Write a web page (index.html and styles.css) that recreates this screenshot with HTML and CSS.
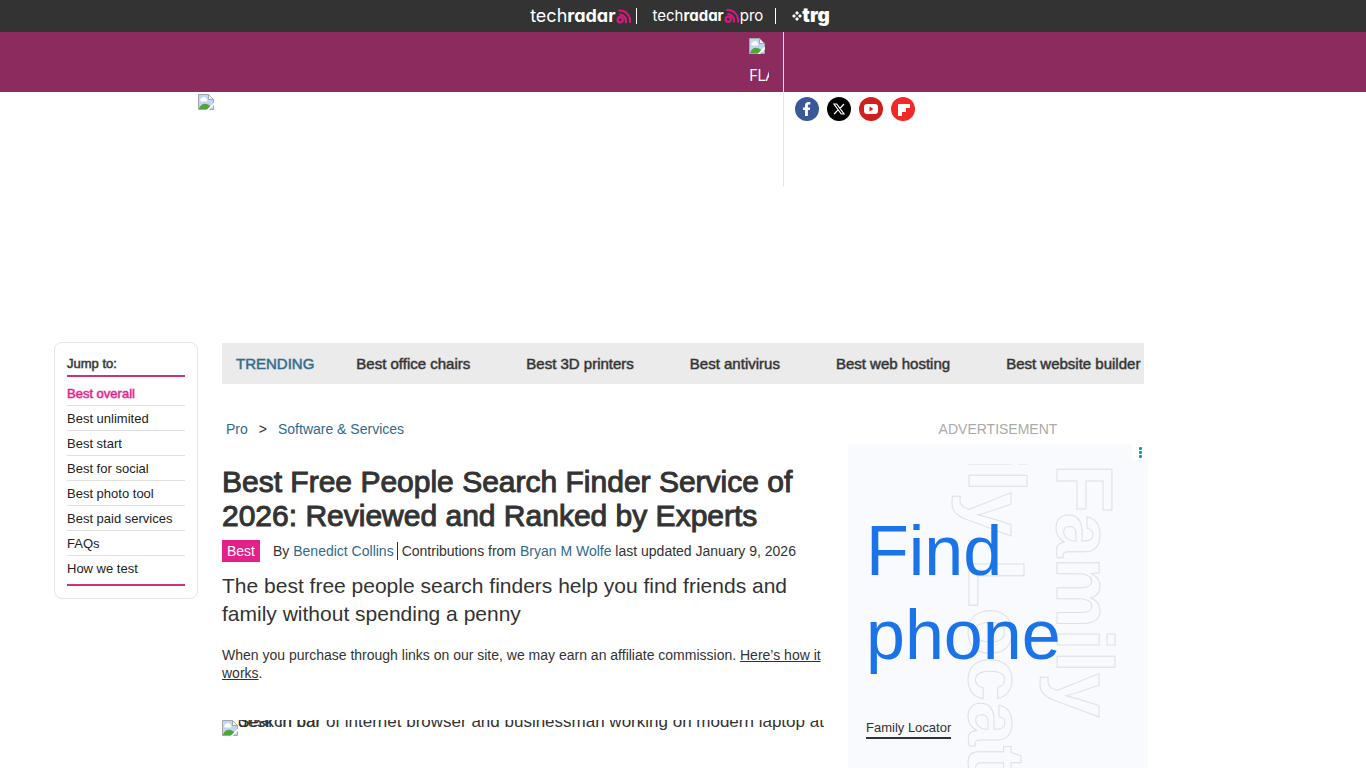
FILE: index.html
```html
<!DOCTYPE html>
<html lang="en">
<head>
<meta charset="utf-8">
<meta name="viewport" content="width=device-width, initial-scale=1">
<title>Best Free People Search Finder Service of 2026</title>
<link rel="stylesheet" href="styles.css">
</head>
<body>
<svg class="defs" aria-hidden="true">
  <symbol id="broken" viewBox="0 0 16 16">
    <path d="M.5.5h10l5 5v10H.5z" fill="#c3d5f3" stroke="#a3a7ab"/>
    <path d="M3 7.500a2 2 0 0 1 1-3.500 2.500 2.500 0 0 1 4.500 1 1.500 1.500 0 0 1 0 2.500z" fill="#fff"/>
    <path d="M1 15c1-5 7-7 11-3l1 3z" fill="#4ea63b"/>
    <path d="M10.500.5v5h5z" fill="#f4f6f8" stroke="#a3a7ab"/>
    <path d="M16 8.500 8.500 16H11l5-5z" fill="#fff"/>
  </symbol>
  <symbol id="waves" viewBox="0 0 17 17">
    <g fill="none" stroke="#d6187f">
      <circle cx="4.500" cy="12" r="2.800" stroke-width="2.400"/>
      <path d="M3.500 6.300a7 7 0 0 1 6.800 9.200" stroke-width="2.200"/>
      <path d="M2.500 2.200c8-1 13.500 6 12.300 13" stroke-width="2.200"/>
    </g>
  </symbol>
</svg>

<nav class="brands" aria-label="Brands">
  <a class="brand" href="#"><span>tech<b>radar</b></span><svg class="waves"><use href="#waves"/></svg></a>
  <a class="brand brand-pro" href="#"><span>tech<b>radar</b></span><svg class="waves"><use href="#waves"/></svg><span>pro</span></a>
  <a class="brand brand-trg" href="#"><svg class="diamonds" viewBox="0 0 10 10"><path d="M5 0l2 2-2 2-2-2zM5 6l2 2-2 2-2-2zM2 3l2 2-2 2-2-2zM8 3l2 2-2 2-2-2z" fill="#fff"/></svg><span>trg</span></a>
</nav>

<header class="header">
  <div class="header-inner">
    <div class="header-left">
      <a class="site-logo" href="#" aria-label="Home"><svg class="broken"><use href="#broken"/></svg></a>
      <button class="flag" type="button"><svg class="broken"><use href="#broken"/></svg><span>FLAG</span></button>
    </div>
    <div class="social">
      <a href="#" aria-label="Facebook"><svg viewBox="0 0 24 24"><circle cx="12" cy="12" r="12" fill="#3b5998"/><path d="M10 19v-6H8v-2.600h2V8.600C10 6.200 11.300 5 13.400 5l1.900.1v2.500h-1.200c-1 0-1.200.5-1.200 1.200v1.600h2.300l-.4 2.600h-1.900v6z" fill="#fff"/></svg></a>
      <a href="#" aria-label="X"><svg viewBox="0 0 24 24"><circle cx="12" cy="12" r="12"/><path d="M7 7h2.700l7.300 10h-2.700zM17 7l-4.200 4.500M11.300 12.700 7.200 17" fill="none" stroke="#fff" stroke-width="1.200"/></svg></a>
      <a href="#" aria-label="YouTube"><svg viewBox="0 0 24 24"><circle cx="12" cy="12" r="12" fill="#cd201f"/><rect x="5" y="7" width="14" height="10" rx="3" fill="#fff"/><path d="M10.500 9.500v5l4-2.500z" fill="#cd201f"/></svg></a>
      <a href="#" aria-label="Flipboard"><svg viewBox="0 0 24 24"><circle cx="12" cy="12" r="12" fill="#f52828"/><path d="M7 7h12v4h-4v4h-4v4H7z" fill="#fff"/></svg></a>
    </div>
  </div>
</header>

<div class="page">
  <aside class="jump">
    <h2>Jump to:</h2>
    <ul>
      <li><a class="current" href="#">Best overall</a></li>
      <li><a href="#">Best unlimited</a></li>
      <li><a href="#">Best start</a></li>
      <li><a href="#">Best for social</a></li>
      <li><a href="#">Best photo tool</a></li>
      <li><a href="#">Best paid services</a></li>
      <li><a href="#">FAQs</a></li>
      <li><a href="#">How we test</a></li>
    </ul>
  </aside>

  <main class="content">
    <nav class="trending" aria-label="Trending">
      <span class="trending-title">TRENDING</span>
      <div class="trending-links">
        <a href="#">Best office chairs</a>
        <a href="#">Best 3D printers</a>
        <a href="#">Best antivirus</a>
        <a href="#">Best web hosting</a>
        <a href="#">Best website builder</a>
      </div>
    </nav>

    <div class="columns">
      <article class="article">
        <nav class="crumbs" aria-label="Breadcrumb"><a href="#">Pro</a><span>&gt;</span><a href="#">Software &amp; Services</a></nav>
        <h1>Best Free People Search Finder Service of 2026: Reviewed and Ranked by Experts</h1>
        <div class="byline">
          <a class="tag" href="#">Best</a>
          <span class="author">By <a href="#">Benedict Collins</a></span>
          <span class="contrib">Contributions from <a href="#">Bryan M Wolfe</a> last updated January 9, 2026</span>
        </div>
        <p class="summary">The best free people search finders help you find friends and family without spending a penny</p>
        <p class="affiliate">When you purchase through links on our site, we may earn an affiliate commission. <a href="#">Here’s how it works</a>.</p>
        <div class="hero">
          <svg class="broken"><use href="#broken"/></svg>
          <p>Search bar of internet browser and businessman working on modern laptop at desk in bar</p>
        </div>
      </article>

      <aside class="ad-column">
        <p class="ad-label">ADVERTISEMENT</p>
        <div class="ad">
          <svg class="ad-art" viewBox="0 0 300 304" aria-hidden="true">
            <text transform="translate(209 0) rotate(90)">Family</text>
            <text transform="translate(121 -181) rotate(90)">Family Locator</text>
          </svg>
          <button class="ad-menu" type="button" aria-label="Ad options"><i></i><i></i><i></i></button>
          <p class="ad-title">Find phone</p>
          <a class="ad-link" href="#">Family Locator</a>
        </div>
      </aside>
    </div>
  </main>
</div>
</body>
</html>
```
FILE: styles.css
```css
* { box-sizing: border-box; }
body {
  margin: 0;
  background: #fff;
  color: #333;
  font-family: "Liberation Sans", Arial, sans-serif;
  font-size: 14px;
  overflow: hidden;
}
h1, h2, p, ul { margin: 0; padding: 0; font-weight: 400; }
ul { list-style: none; }
a { color: #2f6a8d; text-decoration: none; }
button { padding: 0; border: 0; background: none; font: inherit; }
.defs { display: none; }
.broken { display: block; width: 16px; height: 16px; }

.brands {
  display: flex;
  justify-content: center;
  align-items: center;
  height: 32px;
  padding-right: 6px;
  background: #333;
}
.brand {
  display: flex;
  align-items: center;
  height: 16px;
  color: #fff;
  font-family: Inter, Lato, sans-serif;
  font-size: 18px;
  font-feature-settings: "cv11";
  line-height: 16px;
}
.brand + .brand { margin-left: 4px; padding-left: 16px; border-left: 1px solid #fff; }
.brand-pro { font-size: 15px; }
.brand + .brand-trg { margin-left: 12px; }
.brand-trg { font-size: 19px; font-weight: 900; }
.waves { width: 16px; height: 17px; }
.brand-pro .waves { height: 16px; }
.diamonds { width: 10px; height: 10px; }

.header { background: linear-gradient(#8c2b5e 60px, #fff 60px); }
.header-inner { display: flex; max-width: 970px; margin: 0 auto; }
.header-left {
  display: flex;
  justify-content: space-between;
  width: 586px;
  height: 154px;
  padding-right: 14px;
  border-right: 1px solid #e5e5e5;
}
.site-logo { padding-top: 62px; }
.flag {
  display: flex;
  flex-direction: column;
  gap: 9px;
  width: 20px;
  height: 60px;
  padding-top: 6px;
  overflow: hidden;
  color: #fff;
  font-family: "Open Sans", sans-serif;
  font-size: 16px;
  line-height: 24px;
}
.flag svg { flex: none; }
.social { display: flex; gap: 8px; padding: 65px 0 0 11px; }
.social svg { display: block; width: 24px; height: 24px; }

.page {
  display: grid;
  grid-template-columns: 1fr minmax(0, 922px) 1fr;
  gap: 24px;
  align-items: start;
  margin-top: 156px;
}
.jump {
  justify-self: end;
  width: 144px;
  padding: 12px;
  border: 1px solid #e5e5e5;
  border-radius: 8px;
  font-size: 13px;
}
.jump h2 {
  padding-bottom: 2px;
  border-bottom: 2px solid #d1307f;
  font-size: 13px;
  line-height: 18px;
  -webkit-text-stroke: 1px rgba(51, 51, 51, .5);
}
.jump ul { padding: 4px 0 3px; border-bottom: 2px solid #d1307f; }
.jump li { padding-top: 2px; border-bottom: 1px solid #e0e0e0; line-height: 22px; }
.jump li:last-child { border-color: transparent; }
.jump a { color: #222; }
.jump .current { color: #e4218a; -webkit-text-stroke: 1px rgba(228, 33, 138, .5); }

.content { padding-top: 1px; }
.trending {
  display: flex;
  gap: 42px;
  height: 41px;
  padding-left: 14px;
  overflow: hidden;
  background: #ebebeb;
  font-size: 15px;
  line-height: 41px;
  white-space: nowrap;
}
.trending-title { color: #2f6a8d; -webkit-text-stroke: 1px rgba(47, 106, 141, .5); }
.trending-links { display: flex; gap: 56px; }
.trending-links a { color: #333; -webkit-text-stroke: 1px rgba(51, 51, 51, .5); }

.columns {
  display: grid;
  grid-template-columns: minmax(0, 602px) 300px;
  gap: 24px;
  margin-right: -4px;
  padding-top: 36px;
}
.crumbs { display: flex; gap: 11px; padding-left: 4px; line-height: 18px; }
h1 {
  margin-top: 27px;
  font-size: 30px;
  line-height: 34px;
  -webkit-text-stroke: 1px #333;
}
.byline { display: flex; align-items: center; margin-top: 7px; line-height: 18px; }
.tag { margin-right: 13px; padding: 2px 5px; background: #e4218a; color: #fff; }
.author { padding-right: 3px; border-right: 1px solid #333; }
.contrib { padding-left: 4px; }
.summary { margin-top: 10px; font-size: 21px; line-height: 28px; }
.affiliate { margin-top: 18px; line-height: 18px; }
.affiliate a { color: #333; text-decoration: underline; }
.hero { display: flex; height: 48px; margin-top: 38px; overflow: hidden; }
.hero svg { flex: none; }
.hero p { padding-top: 2px; font-size: 17px; line-height: 0; }

.ad-label { color: #aaa; line-height: 18px; text-align: center; }
.ad {
  position: relative;
  height: 324px;
  margin-top: 6px;
  padding: 65px 18px 0;
  overflow: hidden;
  background: #f8fafe;
}
.ad-art { position: absolute; top: 20px; left: 0; width: 300px; height: 304px; overflow: hidden; }
.ad-art text {
  fill: none;
  stroke: #dfe0e6;
  stroke-width: 1px;
  font-family: "Liberation Sans", Arial, sans-serif;
  font-size: 80px;
  font-weight: 700;
}
.ad-menu {
  display: flex;
  position: absolute;
  top: 0;
  right: 0;
  flex-direction: column;
  align-items: center;
  justify-content: center;
  gap: 1px;
  width: 16px;
  height: 16px;
  background: #fff;
}
.ad-menu i { width: 3px; height: 3px; border-radius: 1px; background: #00a3ad; }
.ad-title { position: relative; width: 200px; color: #1a73e8; font-size: 70px; line-height: 84px; }
.ad-link {
  display: inline-block;
  position: relative;
  margin-top: 42px;
  border-bottom: 2px solid #333;
  color: #333;
  font-size: 13px;
  line-height: 18px;
}
```
